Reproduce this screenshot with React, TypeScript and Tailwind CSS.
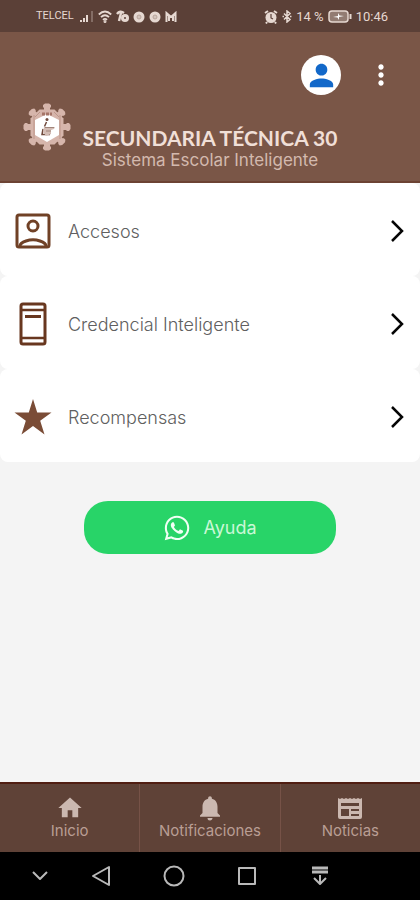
import type { ReactNode } from "react";
import { FaWhatsapp } from "react-icons/fa";
import { MdHome, MdMoreVert, MdNotifications, MdPerson } from "react-icons/md";

function StatusBar() {
  return (
    <div className="flex h-8 items-center justify-between bg-[#5b4037] pr-8 pl-9 pt-px font-['Roboto',sans-serif] text-[#e6d8d1]">
      <div className="flex items-center gap-1">
        <span className="mr-1 w-9 text-[11px]">TELCEL</span>
        <svg width="14" height="13" viewBox="0 0 14 13" fill="currentColor" aria-hidden="true">
          <path d="M0 10h2v2H0zM3 8h2v4H3zM6 5h2v7H6z" />
          <path d="M11 1h2v11h-2z" opacity=".3" />
        </svg>
        <svg width="14" height="13" viewBox="0 0 14 13" fill="none" stroke="currentColor" strokeWidth="1.800" aria-hidden="true">
          <path d="M.8 4.500q6.200-6 12.400 0M3 7.200q4-4 8 0M5 9.800q2-2 4 0" />
          <circle cx="7" cy="11.500" r=".6" />
        </svg>
        <svg width="13" height="13" viewBox="0 0 13 13" aria-hidden="true">
          <path d="M1 4q3-4 7-1M5 3l-2 8" fill="none" stroke="currentColor" strokeWidth="2.400" />
          <circle cx="9" cy="8" r="4" fill="currentColor" />
          <circle cx="9" cy="8" r="1" fill="#5b4037" />
        </svg>
        <ChromeDot />
        <ChromeDot />
        <svg width="12" height="12" viewBox="0 0 12 12" fill="none" stroke="currentColor" strokeWidth="2" aria-hidden="true">
          <path d="M1.500 11V2L6 6l4.500-4v9M4 4v6M8 4v6" />
        </svg>
      </div>
      <div className="flex items-center gap-1">
        <svg width="14" height="14" viewBox="0 0 14 14" aria-hidden="true">
          <circle cx="7" cy="7.500" r="5.500" fill="currentColor" />
          <path d="M1 3l3-2M13 3l-3-2M3 12l-1 1.500M11 12l1 1.500" stroke="currentColor" strokeWidth="2" />
          <path d="M7 4v4l2 1" fill="none" stroke="#5b4037" strokeWidth="1.200" />
        </svg>
        <svg width="10" height="13" viewBox="0 0 10 13" fill="none" stroke="currentColor" strokeWidth="1.500" aria-hidden="true">
          <path d="M2 3.500l6 6-3 2.500V1l3 2.500-6 6M.5 6.500h1.500M8 6.500h1.500" />
        </svg>
        <span className="text-[13px]">14 %</span>
        <svg width="24" height="13" viewBox="0 0 24 13" aria-hidden="true">
          <rect x="1" y="1" width="19" height="11" rx="3" fill="#927c72" stroke="currentColor" strokeWidth="1.500" />
          <path d="M22.500 4v5" stroke="currentColor" strokeWidth="2" />
          <path d="M5 7l5-1V3l1.500 2.500L16 6l-5 1v3L9.500 7.500z" fill="#fff" />
        </svg>
        <span className="text-[13px]">10:46</span>
      </div>
    </div>
  );
}

function ChromeDot() {
  return (
    <svg width="12" height="12" viewBox="0 0 12 12" aria-hidden="true">
      <circle cx="6" cy="6" r="5.500" fill="currentColor" />
      <circle cx="6" cy="6" r="2" fill="#d3c4bc" stroke="#b09a90" strokeWidth=".8" />
    </svg>
  );
}

function SchoolCrest() {
  const teeth = [0, 45, 90, 135, 180, 225, 270, 315];
  return (
    <svg width="48" height="48" viewBox="0 0 48 48" className="shrink-0" role="img" aria-label="Escudo">
      <g fill="#d6b5ab">
        {teeth.map((angle) => (
          <path key={angle} d="M21 10V5l-1-1V2l2-1.500h4L28 2v2l-1 1v5z" transform={`rotate(${angle} 24 24)`} />
        ))}
        <path d="M16.500 6.500h15l9 9v17l-9 9h-15l-9-9v-17z" />
      </g>
      <path d="M11 12v24M37 12v24M17 9l-5 5M31 9l5 5" stroke="#bd968a" strokeWidth="1" />
      <path d="M24 11l12 6v15l-12 7-12-7V17z" fill="#fff" />
      <path d="M19 11h10" stroke="#a57568" strokeWidth="3" strokeDasharray="3 1" />
      <circle cx="24" cy="16.500" r="1.500" fill="#704a3d" />
      <path d="M23.500 19l-2 4.500M20 26l-1 5.500h8" fill="none" stroke="#704a3d" strokeWidth="1.500" />
      <path d="M21 24h11l-1 2-3 1v4l-5 2-3-4z" fill="#d3bcb4" />
      <path d="M22 24.500h9M23 28h5" stroke="#a1857b" strokeWidth="1" />
    </svg>
  );
}

function Header() {
  return (
    <header className="border-b-2 border-[#6c4333] bg-[#7a5647] px-[23px] pt-[23px] pb-[11px]">
      <div className="flex items-center justify-end gap-6">
        <button type="button" aria-label="Perfil" className="flex size-10 items-center justify-center rounded-full bg-white text-[#1268c9]">
          <MdPerson size={35} />
        </button>
        <button type="button" aria-label="Más opciones" className="flex w-8 items-center justify-center text-white">
          <MdMoreVert size={36} />
        </button>
      </div>
      <div className="mt-2 flex items-start">
        <SchoolCrest />
        <div className="flex-1 pt-[23px] text-center whitespace-nowrap">
          <h1 className="font-['Lato',sans-serif] text-[21px] leading-6 font-bold text-[#f0dfd7]">SECUNDARIA TÉCNICA 30</h1>
          <p className="font-['Inter',sans-serif] text-[17px] leading-5 text-[#d3b9ae]">Sistema Escolar Inteligente</p>
        </div>
        <div className="w-12 shrink-0" />
      </div>
    </header>
  );
}

function MenuRow({ label, children }: { label: string; children: ReactNode }) {
  return (
    <li>
      <button type="button" className="flex h-[93px] w-full items-center rounded-lg bg-white pt-0.5 pr-[13px] pl-[13px] text-left">
        <span className="flex w-10 justify-center">{children}</span>
        <span className="ml-[15px] flex-1 pt-0.5 font-['Inter',sans-serif] text-[18px] leading-6 font-light text-[#606060]">{label}</span>
        <svg width="20" height="26" viewBox="0 0 20 26" fill="none" stroke="#050505" strokeWidth="2.500" aria-hidden="true">
          <path d="M5 3l10 10L5 23" />
        </svg>
      </button>
    </li>
  );
}

function NavItem({ label, children }: { label: string; children: ReactNode }) {
  return (
    <a href="#" className="flex flex-1 flex-col items-center border-r border-[#765247] pt-[11px] last:border-r-0">
      <span className="flex h-[26px] items-center text-[#cbb8b0]">{children}</span>
      <span className="text-[15px] leading-5 text-[#b99e94]">{label}</span>
    </a>
  );
}

function SystemButton({ label, children }: { label: string; children: ReactNode }) {
  return (
    <button type="button" aria-label={label} className="flex w-[73px] justify-center first:w-12">
      <svg width="24" height="24" viewBox="0 0 24 24" fill="none" stroke="currentColor" strokeWidth="2" strokeLinejoin="round">
        {children}
      </svg>
    </button>
  );
}

function SystemBar() {
  return (
    <div className="flex h-12 items-center bg-black pl-4 text-[#b9b9b9]">
      <SystemButton label="Ocultar"><path d="M5 8l7 7 7-7" /></SystemButton>
      <SystemButton label="Atrás"><path d="M20 3v18L4 12z" /></SystemButton>
      <SystemButton label="Pantalla principal"><circle cx="12" cy="12" r="9.500" /></SystemButton>
      <SystemButton label="Recientes"><path d="M4 4h16v16H4z" /></SystemButton>
      <SystemButton label="Bajar panel">
        <path d="M4 4h16M4 8h16" strokeWidth="3" />
        <path d="M12 11v9M6 14l6 6 6-6" />
      </SystemButton>
    </div>
  );
}

export default function App() {
  return (
    <div className="flex min-h-screen flex-col bg-[#f4f4f4]">
      <StatusBar />
      <Header />
      <main className="flex flex-1 flex-col">
        <ul className="flex flex-col">
          <MenuRow label="Accesos">
            <svg width="36" height="36" viewBox="0 0 36 36" fill="none" stroke="#704126" strokeWidth="3" aria-hidden="true">
              <rect x="2" y="2" width="32" height="32" rx="2" />
              <circle cx="18" cy="13" r="5" />
              <path d="M5 33q0-3 6-5 7-2.500 14 0 6 2 6 5" />
            </svg>
          </MenuRow>
          <MenuRow label="Credencial Inteligente">
            <svg width="28" height="44" viewBox="0 0 28 44" fill="none" stroke="#68371f" strokeWidth="3" aria-hidden="true">
              <rect x="2" y="2" width="24" height="40" rx="2" />
              <path d="M2 8h24M2 36h24" strokeWidth="2.500" />
              <path d="M6 14.500h16" />
            </svg>
          </MenuRow>
          <MenuRow label="Recompensas">
            <svg width="38" height="38" viewBox="0 0 38 38" fill="#7a4c36" aria-hidden="true">
              <path d="M19 1l4.200 13.500H37.500L26.200 22.800 30.500 36.500 19 28 7.500 36.500 11.800 22.800.500 14.500h14.300z" />
            </svg>
          </MenuRow>
        </ul>
        <div className="flex justify-center px-21 pt-[39px]">
          <button type="button" className="flex h-[53px] w-full items-center justify-center gap-3 rounded-3xl bg-[#28d468] font-['Inter',sans-serif] text-[18px] text-[#c9f8d6]">
            <FaWhatsapp size={28} className="text-[#f1fff5]" />
            Ayuda
          </button>
        </div>
      </main>
      <nav className="flex h-[70px] border-t-2 border-[#501e12] bg-[#5f4237] font-['Inter',sans-serif]">
        <NavItem label="Inicio"><MdHome size={28} /></NavItem>
        <NavItem label="Notificaciones"><MdNotifications size={30} /></NavItem>
        <NavItem label="Noticias">
          <svg width="24" height="22" viewBox="0 0 24 22" aria-hidden="true">
            <path fill="currentColor" fillRule="evenodd" d="M0 1l2 1 2-1 2 1 2-1 2 1 2-1 2 1 2-1 2 1 2-1 2 1 2-1v19a2 2 0 0 1-2 2H2a2 2 0 0 1-2-2zM3 6v3h18V6zM3 12v7h8v-7zM13 12v2h8v-2zM13 17v2h8v-2z" />
          </svg>
        </NavItem>
      </nav>
      <SystemBar />
    </div>
  );
}
